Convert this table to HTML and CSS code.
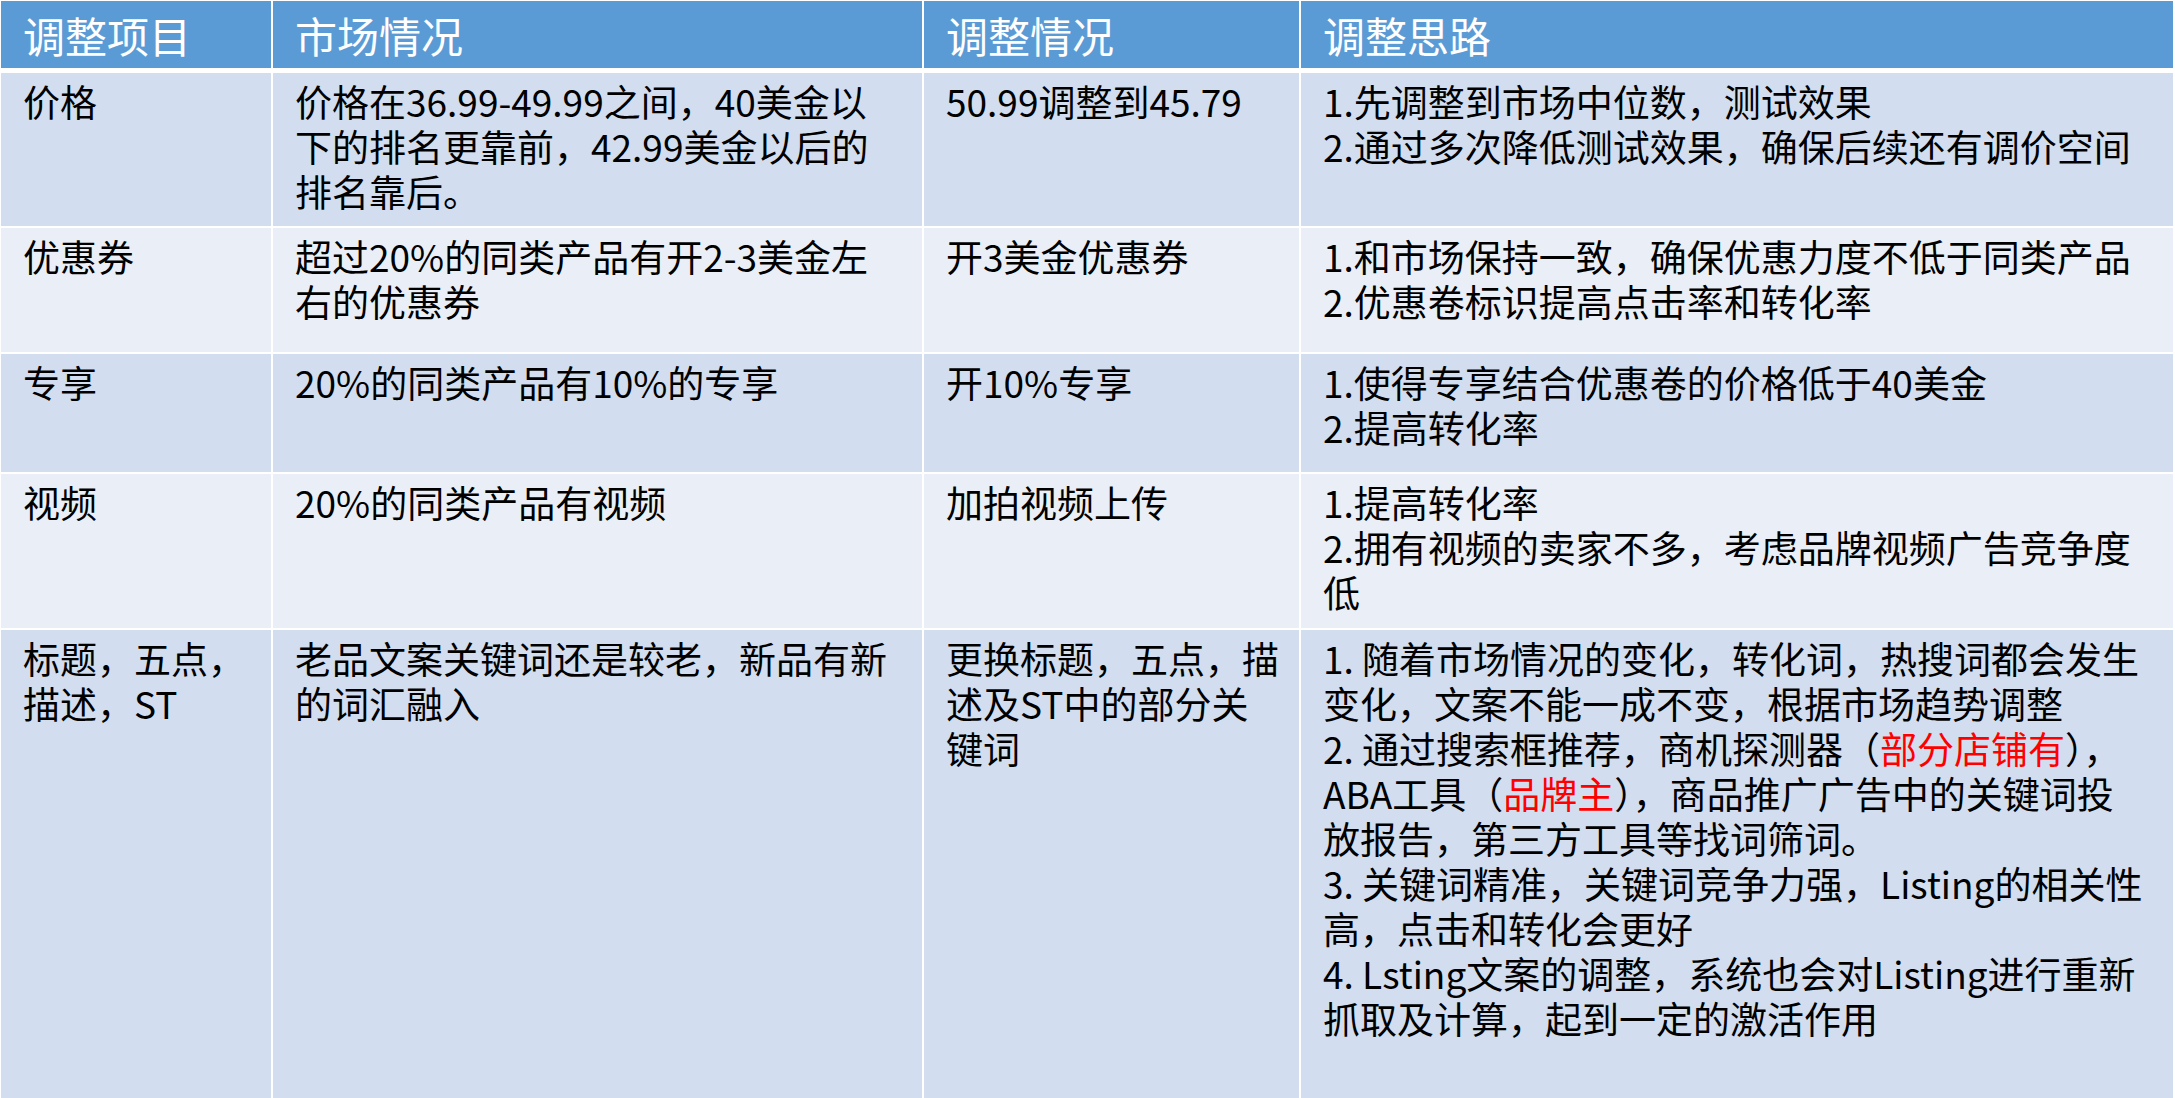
FILE: index.html
```html
<!DOCTYPE html>
<html lang="zh-CN">
<head>
<meta charset="utf-8">
<title>调整项目</title>
<link rel="stylesheet" href="styles.css">
</head>
<body>
<div class="table">
  <div class="head">
    <div class="hcell">调整项目</div>
    <div class="hcell">市场情况</div>
    <div class="hcell">调整情况</div>
    <div class="hcell">调整思路</div>
  </div>
  <div class="rows">
    <div class="cell dark">价格</div>
    <div class="cell dark">价格在36.99-49.99之间，40美金以<br>下的排名更靠前，42.99美金以后的<br>排名靠后。</div>
    <div class="cell dark">50.99调整到45.79</div>
    <div class="cell dark">1.先调整到市场中位数，测试效果<br>2.通过多次降低测试效果，确保后续还有调价空间</div>

    <div class="cell light">优惠券</div>
    <div class="cell light">超过20%的同类产品有开2-3美金左<br>右的优惠券</div>
    <div class="cell light">开3美金优惠券</div>
    <div class="cell light">1.和市场保持一致，确保优惠力度不低于同类产品<br>2.优惠卷标识提高点击率和转化率</div>

    <div class="cell dark">专享</div>
    <div class="cell dark">20%的同类产品有10%的专享</div>
    <div class="cell dark">开10%专享</div>
    <div class="cell dark">1.使得专享结合优惠卷的价格低于40美金<br>2.提高转化率</div>

    <div class="cell light">视频</div>
    <div class="cell light">20%的同类产品有视频</div>
    <div class="cell light">加拍视频上传</div>
    <div class="cell light">1.提高转化率<br>2.拥有视频的卖家不多，考虑品牌视频广告竞争度<br>低</div>

    <div class="cell dark">标题，五点，<br>描述，ST</div>
    <div class="cell dark">老品文案关键词还是较老，新品有新<br>的词汇融入</div>
    <div class="cell dark">更换标题，五点，描<br>述及ST中的部分关<br>键词</div>
    <div class="cell dark">1. 随着市场情况的变化，转化词，热搜词都会发生<br>变化，文案不能一成不变，根据市场趋势调整<br>2. 通过搜索框推荐，商机探测器（<span class="red">部分店铺有</span>），<br>ABA工具（<span class="red">品牌主</span>），商品推广广告中的关键词投<br>放报告，第三方工具等找词筛词。<br>3. 关键词精准，关键词竞争力强，Listing的相关性<br>高，点击和转化会更好<br>4. Lsting文案的调整，系统也会对Listing进行重新<br>抓取及计算，起到一定的激活作用</div>
  </div>
</div>
</body>
</html>
```

FILE: styles.css
```css
html, body {
  margin: 0;
  padding: 0;
  background: #ffffff;
}

body {
  font-family: "Noto Sans CJK SC", "Noto Sans", sans-serif;
  color: #000000;
  overflow: hidden;
}

.table {
  display: flex;
  flex-direction: column;
  gap: 5px;
  padding: 1px 0 0 1px;
  width: 2172px;
}

.head,
.rows {
  display: grid;
  grid-template-columns: 270px 649px 375px 872px;
  column-gap: 2px;
}

.rows {
  row-gap: 2px;
  grid-template-rows: 153px 124px 118px 154px 470px;
}

.hcell {
  background: #5b9bd5;
  color: #ffffff;
  font-size: 42px;
  height: 67px;
  line-height: 67px;
  padding: 0 22px;
  white-space: nowrap;
}

.cell {
  font-size: 37px;
  line-height: 45px;
  padding: 6px 0 0 22px;
  white-space: nowrap;
}

.dark {
  background: #d2deef;
}

.light {
  background: #eaeff7;
}

.red {
  color: #ff0000;
}
```
